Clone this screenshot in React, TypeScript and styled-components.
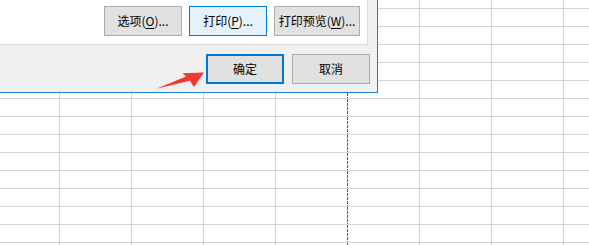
import styled, { createGlobalStyle, css } from "styled-components";

const GlobalStyle = createGlobalStyle`
  html, body {
    margin: 0;
    padding: 0;
    background: #ffffff;
    overflow: hidden;
  }
  body {
    font-family: "Noto Sans CJK SC", "Noto Sans", sans-serif;
  }
`;

const COLS = 9;
const ROWS = 15;
const PAGE_BREAK_COL = 4;

const Screen = styled.div`
  position: relative;
  width: 589px;
  height: 245px;
  overflow: hidden;
`;

const Sheet = styled.div`
  display: grid;
  grid-template-columns: 60px repeat(${COLS - 1}, 72px);
  grid-template-rows: 9px repeat(${ROWS - 1}, 18px);
`;

const Cell = styled.div<{ $pageBreak?: boolean }>`
  box-sizing: border-box;
  border-right: 1px solid #d4d4d4;
  border-bottom: 1px solid #d4d4d4;

  ${({ $pageBreak }) =>
    $pageBreak &&
    css`
      border-right-color: transparent;
      background-image: linear-gradient(#555555 3px, transparent 3px);
      background-size: 1px 4px;
      background-repeat: repeat-y;
      background-origin: border-box;
      background-position: right top;
    `}
`;

const Dialog = styled.div`
  position: absolute;
  left: -12px;
  top: -60px;
  width: 390px;
  height: 153px;
  box-sizing: border-box;
  border: 1px solid #1a7fd6;
  background: #f0f0f0;
  display: flex;
  flex-direction: column;
  padding-bottom: 8px;
`;

const Panel = styled.div`
  flex: 1;
  margin-right: 9px;
  background: #ffffff;
  border: 1px solid #dcdcdc;
  display: flex;
  justify-content: flex-end;
  align-items: flex-end;
  gap: 7px;
  padding: 0 7px 8px 0;
`;

const Footer = styled.div`
  display: flex;
  justify-content: flex-end;
  gap: 8px;
  margin-top: 9px;
  padding-right: 7px;
`;

type Variant = "normal" | "hot" | "default";

const Button = styled.button<{ $width: number; $variant?: Variant }>`
  box-sizing: border-box;
  width: ${({ $width }) => $width}px;
  height: 30px;
  padding: 0;
  margin: 0;
  display: flex;
  align-items: center;
  justify-content: center;
  font-family: "Noto Sans CJK SC", "Noto Sans", sans-serif;
  font-size: 12px;
  line-height: 16px;
  color: #000000;
  background: #e1e1e1;
  border: 1px solid #adadad;
  border-radius: 0;

  ${({ $variant }) =>
    $variant === "hot" &&
    css`
      background: #e5f1fb;
      border-color: #0078d7;
    `}

  ${({ $variant }) =>
    $variant === "default" &&
    css`
      border: 2px solid #0078d7;
    `}

  u {
    text-decoration-thickness: 1px;
    text-underline-offset: 2px;
  }
`;

const Arrow = styled.svg`
  position: absolute;
  left: 0;
  top: 0;
  pointer-events: none;
`;

export default function App() {
  const cells = [];
  for (let r = 0; r < ROWS; r++) {
    for (let c = 0; c < COLS; c++) {
      cells.push(<Cell key={`${r}-${c}`} $pageBreak={c === PAGE_BREAK_COL} />);
    }
  }

  return (
    <>
      <GlobalStyle />
      <Screen>
        <Sheet>{cells}</Sheet>

        <Dialog>
          <Panel>
            <Button $width={78}>
              选项(<u>O</u>)...
            </Button>
            <Button $width={78} $variant="hot">
              打印(<u>P</u>)...
            </Button>
            <Button $width={86}>
              打印预览(<u>W</u>)...
            </Button>
          </Panel>
          <Footer>
            <Button $width={78} $variant="default">
              确定
            </Button>
            <Button $width={78}>取消</Button>
          </Footer>
        </Dialog>

        <Arrow width="589" height="245" viewBox="0 0 589 245">
          <polygon
            points="156.5,88.8 186,76.4 182.5,73.2 204,72.4 194,87 189.8,80.8"
            fill="#f2372f"
          />
        </Arrow>
      </Screen>
    </>
  );
}
